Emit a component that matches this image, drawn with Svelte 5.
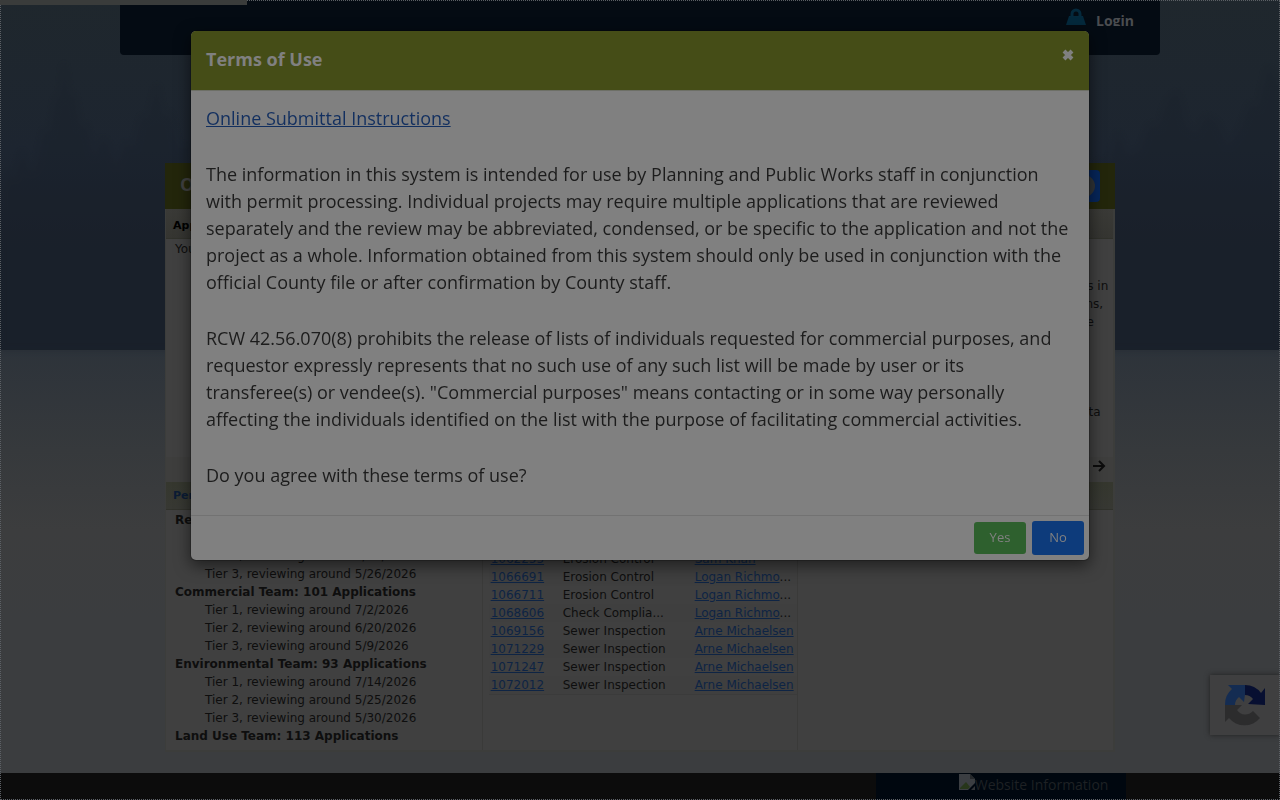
<script>
    let open = $state(true);

    // review teams shown in the first column of the dashboard
    const teams = [
        {
            name: "Residential Team: 214 Applications",
            tiers: ["Tier 1, reviewing around 7/8/2026", "Tier 2, reviewing around 6/12/2026", "Tier 3, reviewing around 5/26/2026"]
        },
        {
            name: "Commercial Team: 101 Applications",
            tiers: ["Tier 1, reviewing around 7/2/2026", "Tier 2, reviewing around 6/20/2026", "Tier 3, reviewing around 5/9/2026"]
        },
        {
            name: "Environmental Team: 93 Applications",
            tiers: ["Tier 1, reviewing around 7/14/2026", "Tier 2, reviewing around 5/25/2026", "Tier 3, reviewing around 5/30/2026"]
        },
        { name: "Land Use Team: 113 Applications", tiers: [] }
    ];

    const inspections = [
        { id: "1060114", type: "Erosion Control", who: "Sam Khan" },
        { id: "1062255", type: "Erosion Control", who: "Sam Khan" },
        { id: "1066691", type: "Erosion Control", who: "Logan Richmond" },
        { id: "1066711", type: "Erosion Control", who: "Logan Richmond" },
        { id: "1068606", type: "Check Compliance", who: "Logan Richmond" },
        { id: "1069156", type: "Sewer Inspection", who: "Arne Michaelsen" },
        { id: "1071229", type: "Sewer Inspection", who: "Arne Michaelsen" },
        { id: "1071247", type: "Sewer Inspection", who: "Arne Michaelsen" },
        { id: "1072012", type: "Sewer Inspection", who: "Arne Michaelsen" }
    ];

    // long values are cut short, the dots stay outside of the link
    const cut = {
        "Logan Richmond": "Logan Richmo",
        "Check Compliance": "Check Complia"
    };

    function close() {
        open = false;
    }
</script>

<div class="page">
    <svg class="trees" viewBox="0 0 1280 350" preserveAspectRatio="none" aria-hidden="true">
        <path d="M0 190 L8 172 L14 178 L22 150 L30 172 L36 166 L44 130 L50 134 L56 96 L60 100 L64 62 L69 98 L74 94 L80 128 L86 124 L94 158 L102 138 L108 144 L116 166 L126 142 L134 148 L142 116 L148 120 L157 84 L163 118 L170 112 L178 150 L190 144 L190 350 L0 350Z" />
        <path d="M1090 190 L1100 160 L1108 166 L1118 132 L1128 156 L1140 150 L1150 124 L1158 128 L1168 100 L1178 92 L1186 126 L1196 134 L1206 116 L1216 122 L1228 146 L1240 130 L1250 104 L1258 108 L1268 66 L1280 88 L1280 350 L1090 350Z" />
    </svg>
    <div class="progress"></div>

    <nav class="topbar">
        <a class="login" href="#login">
            <svg width="20" height="18" viewBox="0 0 20 18" aria-hidden="true">
                <path d="M6 9 V6 a4 4 0 0 1 8 0 V9" fill="none" stroke="#04293c" stroke-width="3" />
                <path d="M3 8 h14 l3 9 h-20z" fill="#04293c" />
            </svg>
            <span>Login</span>
        </a>
    </nav>

    <main class="dash">
        <header class="dash-head">
            <h1>Online Permits</h1>
            <button class="help" aria-label="Help">
                <svg width="24" height="24" viewBox="0 0 24 24" aria-hidden="true">
                    <circle cx="12" cy="12" r="11" fill="#303437" />
                </svg>
            </button>
        </header>

        <section class="intro">
            <h2>Applications</h2>
            <div class="cols">
                <p class="you">You are not logged in</p>
                <p></p>
                <p class="about">
                    Use the top of this page for permits and projects in<br />
                    of county permits, active reviews and inspections,<br />
                    including all current notes and comments on the<br />
                    <br /><br /><br /><br />
                    See the tools for the most recent application data
                </p>
            </div>
            <div class="more">
                <a href="#next" aria-label="Next">
                    <svg width="14" height="12" viewBox="0 0 14 12" aria-hidden="true">
                        <path d="M1 6 H12 M7 1 L12 6 L7 11" fill="none" stroke="#0c0c0c" stroke-width="2" />
                    </svg>
                </a>
            </div>
        </section>

        <section class="lists">
            <h2><a href="#permits">Permit Reviews</a></h2>
            <div class="cols">
                <div class="teams">
                    {#each teams as team}
                        <b>{team.name}</b>
                        {#each team.tiers as tier}
                            <span>{tier}</span>
                        {/each}
                    {/each}
                </div>
                <div class="middle">
                    <table>
                        <tbody>
                            {#each inspections as row}
                                <tr>
                                    <td class="id"><a href="#{row.id}">{row.id}</a></td>
                                    <td class="type">{cut[row.type] ? cut[row.type] + "..." : row.type}</td>
                                    <td><a href="#{row.id}">{cut[row.who] ?? row.who}</a>{cut[row.who] ? "..." : ""}</td>
                                </tr>
                            {/each}
                        </tbody>
                    </table>
                </div>
                <div></div>
            </div>
        </section>
    </main>

    <footer>
        <a class="info" href="#info">
            <svg width="16" height="16" viewBox="0 0 16 16" aria-hidden="true">
                <path d="M0 0 H11 L16 5 V10 L10 16 H0Z" fill="#3b3e42" />
                <path d="M11 0 L16 5 H11Z" fill="#25282b" />
                <path d="M1 14 L7 8 L11 13 L9 15 H1Z" fill="#27361b" />
                <path d="M9 16 L16 9 V11 L11 16Z" fill="#00070f" />
                <path d="M12 16 L16 12 V16Z" fill="#303336" />
            </svg><span>Website Information</span>
        </a>
    </footer>

    <aside class="captcha">
        <svg width="42" height="42" viewBox="0 0 42 42" aria-hidden="true">
            <path d="M41 21 V4 L37 9 A20 20 0 0 0 21 1 V11 A10 10 0 0 1 29 15 L24 20 Z" fill="#070f31" />
            <path d="M21 1 H4 L8 5 A20 20 0 0 0 1 21 H11 A10 10 0 0 1 15 13 L20 18 L21 10Z" fill="#142c52" />
            <path d="M1 21 V38 L5 34 A20 20 0 0 0 36 34 L29 27 A10 10 0 0 1 13 26 L18 21Z" fill="#2c2c2d" />
        </svg>
    </aside>
</div>

{#if open}
    <div class="modal" role="dialog" aria-modal="true" aria-labelledby="terms-title">
        <header>
            <h3 id="terms-title">Terms of Use</h3>
            <button class="x" aria-label="Close" onclick={close}>
                <svg width="12" height="12" viewBox="0 0 12 12" aria-hidden="true">
                    <path d="M2 2 L10 10 M10 2 L2 10" stroke="#808080" stroke-width="4" />
                </svg>
            </button>
        </header>
        <div class="body">
            <p><a href="#instructions">Online Submittal Instructions</a></p>
            <p>
                The information in this system is intended for use by Planning and Public Works staff in conjunction with permit processing. Individual projects may require multiple applications that are reviewed separately and the review may be abbreviated, condensed, or be specific to the application and not the project as a whole. Information obtained from this system should only be used in conjunction with the official County file or after confirmation by County staff.
            </p>
            <p>
                RCW 42.56.070(8) prohibits the release of lists of individuals requested for commercial purposes, and requestor expressly represents that no such use of any such list will be made by user or its transferee(s) or vendee(s). "Commercial purposes" means contacting or in some way personally affecting the individuals identified on the list with the purpose of facilitating commercial activities.
            </p>
            <p>Do you agree with these terms of use?</p>
        </div>
        <div class="actions">
            <button class="yes" onclick={close}>Yes</button>
            <button class="no" onclick={close}>No</button>
        </div>
    </div>
{/if}

<style>
    :global(body) {
        margin: 0;
        background: #3b3d3f;
    }
    * {
        box-sizing: border-box;
    }
    h1, h2, h3, p {
        margin: 0;
    }
    a {
        color: #0e2444;
    }
    button {
        font: inherit;
        border: 0;
        cursor: pointer;
    }

    .page {
        position: relative;
        display: flex;
        flex-direction: column;
        height: 100vh;
        overflow: hidden;
        background:
            linear-gradient(#1f272d 0, #1d2530 150px, #1a202a 250px, #1a202a 100%) 0 0 / 100% 350px no-repeat,
            linear-gradient(#2d333a 350px, #36393c 450px, #3c3d3e 530px, #3b3d3f 620px);
        font-family: Verdana, "DejaVu Sans", sans-serif;
        font-size: 12px;
        line-height: 18px;
        color: #0e0e0e;
    }
    /* dotted focus ring round the whole page */
    .page::after {
        content: "";
        position: absolute;
        inset: 0;
        border: 1px dotted #5c6065;
        pointer-events: none;
    }
    .trees {
        position: absolute;
        top: 0;
        left: 0;
        width: 100%;
        height: 350px;
        fill: #19202a;
        opacity: 0.35;
        filter: blur(3px);
    }
    .progress {
        position: absolute;
        top: 0;
        left: 0;
        z-index: 2;
        width: 247px;
        height: 5px;
        background: #3a3c3b;
    }

    .topbar {
        position: relative;
        flex: none;
        display: flex;
        justify-content: flex-end;
        width: 100%;
        max-width: 1040px;
        height: 55px;
        margin: 0 auto;
        padding: 8px 26px 0 0;
        background: #040b13;
        border-radius: 0 0 4px 4px;
    }
    .login {
        display: flex;
        gap: 10px;
        height: 18px;
        overflow: hidden;
        color: #4b4d50;
        font: bold 14px/26px "Open Sans", sans-serif;
        text-decoration: none;
    }

    .dash {
        position: relative;
        flex: none;
        width: 100%;
        max-width: 950px;
        margin: 108px auto 21px;
        background: #404040;
        border: solid #3c3d3b;
        border-width: 0 2px 2px 1px;
    }
    .dash-head {
        display: flex;
        align-items: center;
        justify-content: space-between;
        height: 46px;
        margin: 0 -2px 0 -1px;
        padding: 0 15px;
        background: #23260b;
    }
    h1 {
        font: bold 18px/24px "Open Sans", sans-serif;
        padding-bottom: 4px;
        color: #404040;
    }
    .help {
        display: flex;
        align-items: center;
        height: 32px;
        padding: 0 4px;
        background: #06265a;
        border-radius: 4px;
    }
    h2 {
        height: 30px;
        padding: 0 7px;
        font-size: 11px;
        line-height: 34px;
        color: #000000;
        background: linear-gradient(#3a3a37, #353531);
        border-bottom: 1px solid #30312b;
    }
    .lists h2 {
        height: 28px;
        line-height: 28px;
        background: linear-gradient(#35372e, #373833);
    }
    h2 a {
        color: #0b1c35;
        text-decoration: none;
    }
    .cols {
        display: grid;
        grid-template-columns: repeat(3, 1fr);
    }
    .intro .cols {
        height: 218px;
        padding-top: 1px;
    }
    .intro p {
        white-space: nowrap;
    }
    .you {
        padding-left: 9px;
    }
    .about {
        padding: 37px 0 0 4px;
    }
    .more {
        display: flex;
        align-items: center;
        justify-content: flex-end;
        height: 25px;
        padding-right: 7px;
        background: #3e3e3d;
    }
    .more a {
        display: flex;
        margin-bottom: 8px;
    }
    .lists .cols {
        height: 240px;
    }
    .lists .cols > div + div {
        border-left: 1px solid #3a3a39;
    }
    .teams {
        display: flex;
        flex-direction: column;
        height: 240px;
        overflow: hidden;
        padding: 1px 0 0 9px;
    }
    .teams span {
        padding-left: 30px;
    }
    .middle {
        padding: 22px 0 0 6px;
    }
    table {
        width: 100%;
        table-layout: fixed;
        border-collapse: collapse;
        border-bottom: 1px solid #3b3b3b;
    }
    td {
        padding: 0 0 0 2px;
        white-space: nowrap;
    }
    tr:nth-child(odd) {
        background: #3f3f3f;
    }
    .id {
        width: 72px;
    }
    .type {
        width: 132px;
    }

    footer {
        position: relative;
        flex: none;
        display: flex;
        justify-content: flex-end;
        height: 80px;
        padding-right: 12%;
        background: #0c0c0c;
    }
    .info {
        display: flex;
        justify-content: flex-end;
        align-items: flex-start;
        width: 250px;
        padding: 1px 18px 0 0;
        background: #00070f;
        color: #1e2124;
        font: 14px/22px "Open Sans", sans-serif;
        text-decoration: none;
    }

    .captcha {
        position: absolute;
        right: 0;
        bottom: 65px;
        width: 70px;
        height: 60px;
        padding: 9px 14px;
        background: #3f3f40;
        box-shadow: 0 0 5px #202020;
    }

    .modal {
        position: fixed;
        top: 30px;
        left: 0;
        right: 0;
        max-width: 900px;
        margin: 0 auto;
        border: 1px solid rgba(0, 0, 0, 0.2);
        border-radius: 6px;
        background: #808080;
        background-clip: padding-box;
        box-shadow: 0 5px 15px rgba(0, 0, 0, 0.5);
        font-family: "Open Sans", sans-serif;
        color: #1c1c1c;
    }
    .modal header {
        display: flex;
        align-items: flex-start;
        justify-content: space-between;
        height: 60px;
        padding: 16px 15px;
        background: #454d17;
        border-bottom: 1px solid #6d6f66;
        border-radius: 5px 5px 0 0;
    }
    h3 {
        font-size: 18px;
        line-height: 25px;
        color: #808080;
    }
    .x {
        display: flex;
        margin-top: 2px;
        padding: 0;
        background: none;
    }
    .body {
        display: flex;
        flex-direction: column;
        gap: 29px;
        padding: 14px 15px 26px;
        font-size: 18px;
        line-height: 27px;
    }
    .body a {
        color: #122f5f;
    }
    .actions {
        display: flex;
        align-items: center;
        justify-content: flex-end;
        gap: 6px;
        padding: 5px;
        border-top: 1px solid #727272;
        font-size: 13px;
    }
    .actions button {
        width: 52px;
        height: 32px;
        padding: 0 0 2px;
        border-radius: 3px;
        color: #808080;
    }
    .actions .yes {
        background: #2e602e;
    }
    .actions .no {
        height: 34px;
        background: #0d3b7b;
    }
</style>
